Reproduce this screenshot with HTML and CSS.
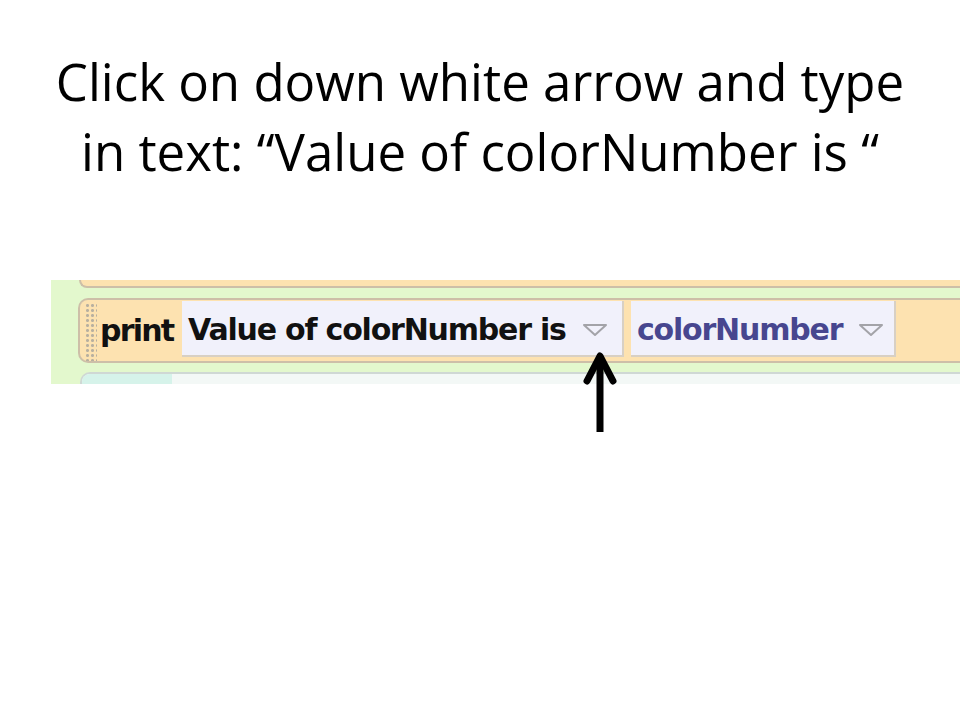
FILE: index.html
```html
<!DOCTYPE html>
<html lang="en">
<head>
    <meta charset="UTF-8">
    <title>Click on down white arrow</title>
    <link rel="stylesheet" href="styles.css">
</head>
<body>
    <h1 class="title">Click on down white arrow and type<br>in text: “Value of colorNumber is “</h1>

    <div class="shot">
        <div class="block-prev"></div>

        <div class="block">
            <span class="grip"></span>
            <span class="label">print</span>
            <span class="field text-field">
                Value of colorNumber is
                <svg class="dd" width="26" height="14" viewBox="0 0 26 14"><path d="M2 2 H24 L13 12 Z" fill="none" stroke="#a3a3a8" stroke-width="2" stroke-linejoin="round"/></svg>
            </span>
            <span class="field var-field">
                colorNumber
                <svg class="dd" width="26" height="14" viewBox="0 0 26 14"><path d="M2 2 H24 L13 12 Z" fill="none" stroke="#a3a3a8" stroke-width="2" stroke-linejoin="round"/></svg>
            </span>
        </div>

        <div class="block-next"><span class="next-head"></span></div>
    </div>

    <!-- pointer over the screenshot -->
    <svg class="pointer" width="34" height="84" viewBox="0 0 34 84">
        <path d="M17 6 V82" stroke="#000" stroke-width="7"/>
        <path d="M4 31 L17 6 L30 31" fill="none" stroke="#000" stroke-width="7" stroke-linecap="round" stroke-linejoin="round"/>
    </svg>
</body>
</html>
```

FILE: styles.css
```css
body {
    margin: 0;
    background: #fff;
    font-family: "Open Sans", Arial, sans-serif;
    position: relative;
    height: 720px;
    overflow: hidden;
}

.title {
    margin: 46px 0 0;
    text-align: center;
    font-weight: normal;
    font-size: 51px;
    line-height: 70px;
    color: #000;
}

.shot {
    margin: 94px 0 0 51px;
    height: 104px;
    background: #e3f8cd;
    overflow: hidden;
    display: flex;
    flex-direction: column;
}

.block-prev {
    height: 9px;
    margin-left: 28px;
    background: #fde2b0;
    border: 2px solid #cdbfa8;
    border-top: none;
    border-radius: 0 0 0 10px;
    border-right: none;
}

.block {
    margin: 10px 0 0 27px;
    height: 69px;
    box-sizing: border-box;
    background: #fde2b0;
    border: 2px solid #cdbfa8;
    border-right: none;
    border-radius: 10px 0 0 10px;
    display: flex;
    align-items: flex-start;
    padding: 1px 0 0 5px;
    font-family: "DejaVu Sans", Verdana, sans-serif;
    font-weight: bold;
    font-size: 30px;
    letter-spacing: -1.2px;
}

.grip {
    width: 12px;
    height: 58px;
    margin-top: 2px;
    background-image: radial-gradient(circle, #b8b0a0 1.3px, transparent 1.6px);
    background-size: 5px 5px;
}

.label {
    margin: 12px 0 0 3px;
    width: 82px;
    letter-spacing: -1.8px;
    color: #111;
}

.field {
    height: 56px;
    box-sizing: border-box;
    background: #f1f1fb;
    border-right: 2px solid #d8d0c4;
    border-bottom: 2px solid #d8d0c4;
    display: flex;
    align-items: center;
    gap: 16px;
    padding: 2px 0 0 6px;
}

.text-field {
    width: 442px;
    color: #111;
}

.var-field {
    margin-left: 7px;
    width: 265px;
    color: #47468f;
}

.dd {
    margin-top: 2px;
}

.block-next {
    margin: 9px 0 0 29px;
    height: 10px;
    background: #f3f8f6;
    border-top: 2px solid #cfd8d4;
    border-left: 2px solid #cfd8d4;
    border-radius: 10px 0 0 0;
}

.next-head {
    display: block;
    width: 90px;
    height: 10px;
    background: #d6f3ea;
    border-radius: 8px 0 0 0;
}

.pointer {
    position: absolute;
    left: 583px;
    top: 350px;
}
```
